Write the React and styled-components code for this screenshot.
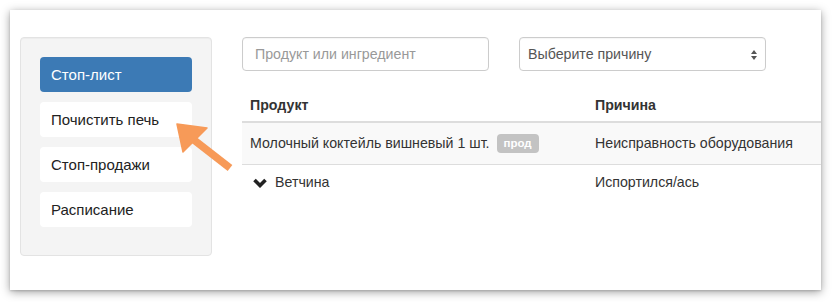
import React from "react";
import styled, { createGlobalStyle } from "styled-components";

const Global = createGlobalStyle`
  html, body { margin: 0; padding: 0; background: #ffffff; }
  body { font-family: "Liberation Sans", Arial, sans-serif; font-size: 14px; color: #333; }
  * { box-sizing: border-box; }
`;

const Page = styled.div`
  padding: 10px 11px 12px 10px;
  width: 832px;
  height: 302px;
`;

const Card = styled.div`
  position: relative;
  width: 811px;
  height: 280px;
  background: #fff;
  box-shadow: 0 2px 9px rgba(0, 0, 0, 0.38), 0 1px 2px rgba(0, 0, 0, 0.15);
  overflow: hidden;
  display: flex;
  align-items: flex-start;
  padding: 27px 0 0 10px;
  gap: 30px;
`;

const Sidebar = styled.div`
  flex: none;
  width: 192px;
  height: 219px;
  background: #f4f4f4;
  border: 1px solid #e3e3e3;
  border-radius: 4px;
  box-shadow: inset 0 1px 1px rgba(0, 0, 0, 0.03);
  padding: 19px 19px;
  display: flex;
  flex-direction: column;
  gap: 10px;
`;

const NavItem = styled.div`
  height: 35px;
  display: flex;
  align-items: center;
  padding: 0 11px;
  border-radius: 4px;
  font-size: 15px;
  background: ${(p) => (p.$active ? "#3c7ab5" : "#fff")};
  color: ${(p) => (p.$active ? "#fff" : "#222")};
`;

const Main = styled.div`
  flex: none;
  width: 700px;
  display: flex;
  flex-direction: column;
`;

const Filters = styled.div`
  display: flex;
  gap: 30px;
`;

const Field = styled.div`
  position: relative;
  width: 247px;
  height: 34px;
  border: 1px solid #ccc;
  border-radius: 4px;
  background: #fff;
  display: flex;
  align-items: center;
  padding: 0 ${(p) => (p.$select ? "8px" : "12px")};
  color: ${(p) => (p.$placeholder ? "#999" : "#555")};
  font-size: 14.2px;
  box-shadow: inset 0 1px 1px rgba(0, 0, 0, 0.04);
`;

const SelectArrows = styled.svg`
  position: absolute;
  right: 8px;
  top: 12px;
`;

const Table = styled.table`
  margin-top: 15px;
  width: 700px;
  border-collapse: collapse;
  font-size: 14.2px;
`;

const Th = styled.th`
  text-align: left;
  font-weight: bold;
  padding: 9px 8px 6px;
  line-height: 20px;
  border-bottom: 2px solid #ddd;
  width: ${(p) => p.$w || "auto"};
`;

const Tr = styled.tr`
  background: ${(p) => (p.$striped ? "#f9f9f9" : "#fff")};
  border-bottom: ${(p) => (p.$last ? "none" : "1px solid #ddd")};
`;

const Td = styled.td`
  padding: ${(p) => p.$pad || "8px"} 8px;
  line-height: 20px;
  vertical-align: top;
  color: #333;
`;

const Label = styled.span`
  display: inline-block;
  margin-left: 7px;
  padding: 0 7px;
  height: 19px;
  line-height: 19px;
  border-radius: 4px;
  background: #c3c3c3;
  color: #fff;
  font-weight: bold;
  font-size: 11.5px;
  vertical-align: 1px;
`;

const Chevron = styled.svg`
  display: inline-block;
  vertical-align: -1px;
  margin: 0 8px 0 3px;
`;

const Arrow = styled.svg`
  position: absolute;
  left: 160px;
  top: 110px;
  pointer-events: none;
`;

export default function App() {
  return (
    <>
      <Global />
      <Page>
        <Card>
          <Sidebar>
            <NavItem $active>Стоп-лист</NavItem>
            <NavItem>Почистить печь</NavItem>
            <NavItem>Стоп-продажи</NavItem>
            <NavItem>Расписание</NavItem>
          </Sidebar>
          <Main>
            <Filters>
              <Field $placeholder>Продукт или ингредиент</Field>
              <Field $select>
                Выберите причину
                <SelectArrows width="6" height="10" viewBox="0 0 6 10">
                  <path d="M3 0 L6 4 L0 4 Z" fill="#555" />
                  <path d="M3 10 L6 6 L0 6 Z" fill="#555" />
                </SelectArrows>
              </Field>
            </Filters>
            <Table>
              <thead>
                <tr>
                  <Th $w="345px">Продукт</Th>
                  <Th>Причина</Th>
                </tr>
              </thead>
              <tbody>
                <Tr $striped>
                  <Td $pad="10px 8px 11px">
                    Молочный коктейль вишневый 1 шт.<Label>прод</Label>
                  </Td>
                  <Td $pad="10px 8px 11px">Неисправность оборудования</Td>
                </Tr>
                <Tr $last>
                  <Td $pad="7px">
                    <Chevron width="14" height="10" viewBox="0 0 14 10">
                      <path d="M1.5 2 L7 7.5 L12.5 2" fill="none" stroke="#222" strokeWidth="3.6" strokeLinejoin="miter" />
                    </Chevron>
                    Ветчина
                  </Td>
                  <Td $pad="7px">Испортился/ась</Td>
                </Tr>
              </tbody>
            </Table>
          </Main>
          <Arrow width="80" height="70" viewBox="0 0 80 70">
            <path d="M60 48 L24 20" stroke="#f79a58" strokeWidth="7.5" strokeLinecap="butt" />
            <path d="M7 4 L37 8 L13 32 Z" fill="#f79a58" strokeLinejoin="round" stroke="#f79a58" strokeWidth="1.5" />
          </Arrow>
        </Card>
      </Page>
    </>
  );
}
